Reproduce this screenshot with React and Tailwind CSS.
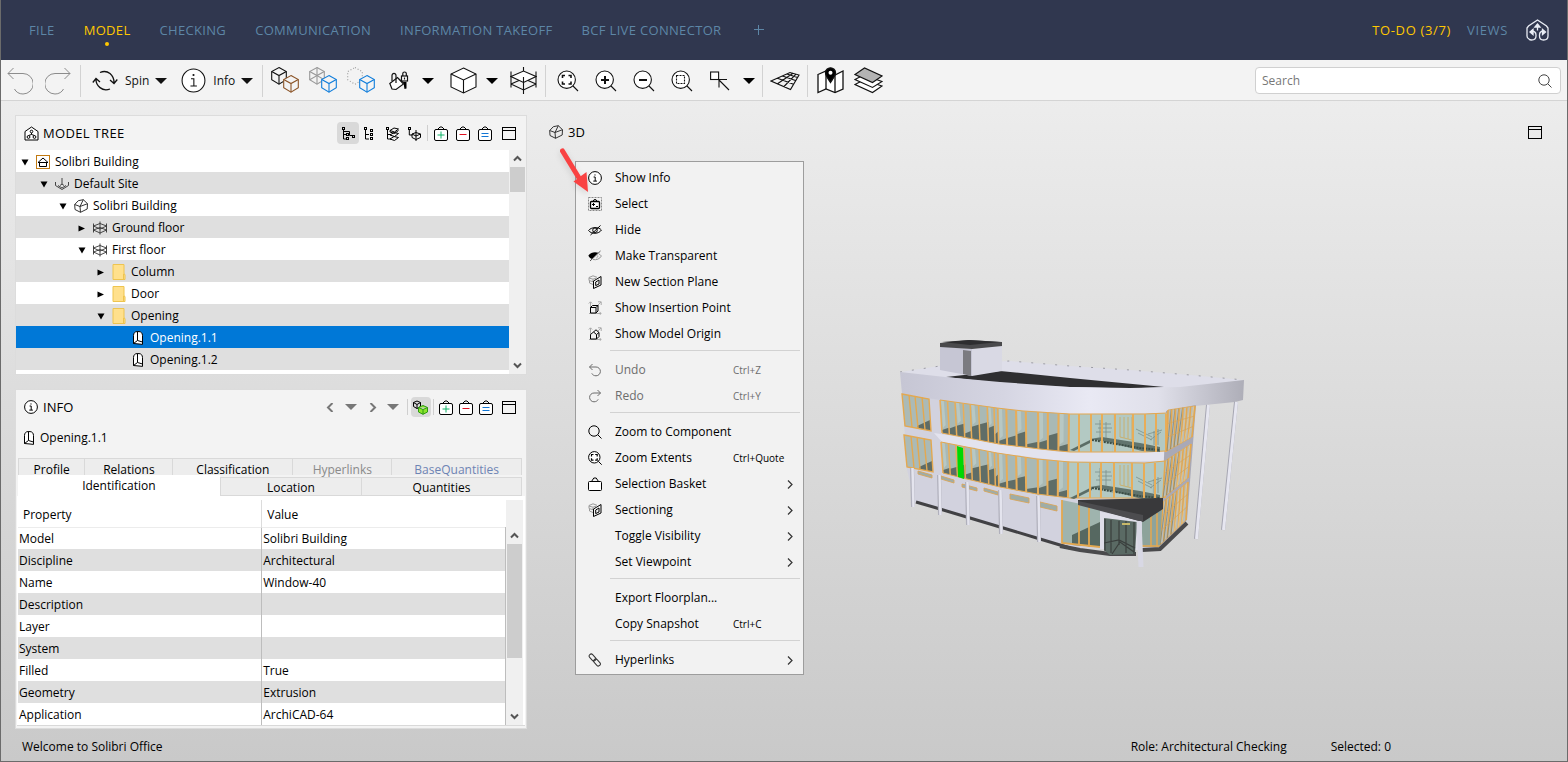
import { useState } from "react";

const NAV = ["FILE", "MODEL", "CHECKING", "COMMUNICATION", "INFORMATION TAKEOFF", "BCF LIVE CONNECTOR"];

const TREE = [
  { label: "Solibri Building", depth: 0, open: true, icon: "project" },
  { label: "Default Site", depth: 1, open: true, icon: "site" },
  { label: "Solibri Building", depth: 2, open: true, icon: "building" },
  { label: "Ground floor", depth: 3, open: false, icon: "floor" },
  { label: "First floor", depth: 3, open: true, icon: "floor" },
  { label: "Column", depth: 4, open: false, icon: "folder" },
  { label: "Door", depth: 4, open: false, icon: "folder" },
  { label: "Opening", depth: 4, open: true, icon: "folder" },
  { label: "Opening.1.1", depth: 5, icon: "opening" },
  { label: "Opening.1.2", depth: 5, icon: "opening" },
];

const PROPERTIES = [
  ["Model", "Solibri Building"],
  ["Discipline", "Architectural"],
  ["Name", "Window-40"],
  ["Description", ""],
  ["Layer", ""],
  ["System", ""],
  ["Filled", "True"],
  ["Geometry", "Extrusion"],
  ["Application", "ArchiCAD-64"],
];

const MENU = [
  [
    { label: "Show Info", icon: "info" },
    { label: "Select", icon: "select" },
    { label: "Hide", icon: "hide" },
    { label: "Make Transparent", icon: "transparent" },
    { label: "New Section Plane", icon: "section" },
    { label: "Show Insertion Point", icon: "insertion" },
    { label: "Show Model Origin", icon: "origin" },
  ],
  [
    { label: "Undo", icon: "undo", keys: "Ctrl+Z", disabled: true },
    { label: "Redo", icon: "redo", keys: "Ctrl+Y", disabled: true },
  ],
  [
    { label: "Zoom to Component", icon: "search" },
    { label: "Zoom Extents", icon: "extents", keys: "Ctrl+Quote" },
    { label: "Selection Basket", icon: "basket", sub: true },
    { label: "Sectioning", icon: "section", sub: true },
    { label: "Toggle Visibility", sub: true },
    { label: "Set Viewpoint", sub: true },
  ],
  [{ label: "Export Floorplan..." }, { label: "Copy Snapshot", keys: "Ctrl+C" }],
  [{ label: "Hyperlinks", icon: "link", sub: true }],
];

/* ---------- icons ---------- */

function Svg({ w = 14, h = 14, box, children, sw = 1 }) {
  return (
    <svg
      width={w}
      height={h}
      viewBox={box || `0 0 ${w} ${h}`}
      fill="none"
      stroke="currentColor"
      strokeWidth={sw}
      className="shrink-0"
      aria-hidden="true"
    >
      {children}
    </svg>
  );
}

function InfoIcon({ size = 14 }) {
  return (
    <Svg w={size} h={size} box="0 0 14 14" sw={size > 20 ? 0.6 : 1}>
      <circle cx="7" cy="7" r="6.4" fill="#fff" />
      <path d="M5.6 6h1.6v4M5.3 10.1h3.6" />
      <circle cx="7" cy="3.9" r=".6" fill="currentColor" stroke="none" />
    </Svg>
  );
}

function SmallIcon({ name }) {
  switch (name) {
    case "project":
      return (
        <Svg>
          <rect x=".5" y=".5" width="13" height="13" fill="#fff" stroke="#c27a12" />
          <path d="M2 7.5L7 3l5 4.5M3.5 7v4.5h7V7M2 7.5h10" />
        </Svg>
      );
    case "site":
      return (
        <Svg>
          <path d="M.5 5v3.5l6.5 4 6.5-4V5M3 8.500L7 11l4-2.500M7 1v6.500M5 8.500l2-1.500 2 1.500" stroke="#444" />
        </Svg>
      );
    case "building":
      return (
        <Svg>
          <path d="M.7 5.500l3.600-3.800 5-1 4.200 4-.3 5.300L6.500 13.300 1 10.500zM.7 5.500L6 7.500l3.300-6.800M6 7.500l.5 5.800M6 7.500l7.500-2.800" stroke="#333" />
        </Svg>
      );
    case "floor":
      return (
        <Svg>
          <path d="M.5 2.500v9M13.500 2.500v9M7 .5v13M.5 5L7 2.500 13.500 5 7 8zM.5 9L7 12l6.500-3M.5 9L7 6.500 13.500 9" stroke="#333" strokeWidth=".9" />
        </Svg>
      );
    case "folder":
      return (
        <Svg w={14} h={16}>
          <path d="M1 .5h11v9.500l1 .5v5H1z" fill="#ffe08c" stroke="#eec44f" />
          <path d="M11.500 10v5" stroke="#eec44f" />
        </Svg>
      );
    case "opening":
      return (
        <Svg>
          <path d="M2.500 12.500V4.500C2.500 2 4 .6 6 .6h2c2 0 3.500 1.500 3.500 4v8.800L8 13M2.500 12.500L8 13M6.500 1v8.500l-4 3M6.500 9.500l5 1.500" fill="#fff" />
        </Svg>
      );
    case "info":
      return <InfoIcon />;
    case "select":
      return (
        <Svg>
          <rect x=".5" y=".5" width="13" height="13" stroke="#888" strokeDasharray="2 1" />
          <rect x="2.500" y="4.500" width="9" height="7" rx="1" fill="#fff" strokeWidth="1.300" />
          <path d="M5 4.500l1-1.800h2l1 1.800M4 7.500h3M5.500 6v3M8 9.500h2" />
        </Svg>
      );
    case "hide":
      return (
        <Svg>
          <path d="M.6 7.500C3 3.800 11 3.800 13.400 7c-2.400 4.300-10.400 4.300-12.800.5z" />
          <circle cx="7" cy="7.200" r="2.300" />
          <path d="M2.500 12L12.500 2.500" />
        </Svg>
      );
    case "transparent":
      return (
        <Svg>
          <path d="M5 10.500c3.500.8 6.700-.5 8.400-3.500-.7-1-1.500-1.600-2.500-2M8.500 9c1-.5 1.500-1.500 1.200-2.500" stroke="#999" />
          <path d="M.4 6.500C3 3 7 2.800 10.500 3.800L4 10C2.500 9.500 1 8.500.4 6.500z" fill="currentColor" stroke="none" />
          <path d="M2 12L12.500 2" stroke="#555" />
        </Svg>
      );
    case "section":
      return (
        <Svg>
          <path d="M6 7L1 5.500v-3L5 .8l4 1.500M1 3l4 1.200 3-1M5 7v-2.500M1.500 6v2L5 9.500" stroke="#999" />
          <path d="M5.500 6L13 1.500v8.500l-7.500 3.500zM7.700 7l3.300-2v4L7.700 10.600z" />
        </Svg>
      );
    case "insertion":
    case "origin":
      return (
        <Svg>
          <path d="M2.500 13V1M.8 2.500L2.500.8l1.700 1.700M1 12.500h12M11.500 10.800l1.700 1.700-1.500 1.300M9 5l4-4M10 .8h3.200V4" stroke="#aaa" />
          {name === "insertion" ? (
            <path d="M2.500 6.500h5.500v5.500H2.500zM2.500 6.500L4.500 4.500h5.500v5.500L8 12M8 6.500l2-2" fill="#f2f2f2" />
          ) : (
            <path d="M2.500 12V7.500l3-2.500 3 2.500V12zM5.500 5L8 2.800l3 2.700v4L8.500 12M8.500 7.500l2.500-2" fill="#f2f2f2" />
          )}
        </Svg>
      );
    case "undo":
      return (
        <Svg>
          <path d="M4.500 1L1.500 4l3 3M1.500 4H8a4.400 4.400 0 0 1 0 8.800c-2 0-3.500-1-4.200-2.400" />
        </Svg>
      );
    case "redo":
      return (
        <Svg>
          <path d="M9.500 1l3 3-3 3M12.500 4H6a4.400 4.400 0 0 0 0 8.800c2 0 3.500-1 4.200-2.400" />
        </Svg>
      );
    case "search":
      return (
        <Svg>
          <circle cx="6" cy="6" r="5.200" />
          <path d="M9.800 9.800L13.500 13.500" />
        </Svg>
      );
    case "extents":
      return (
        <Svg>
          <circle cx="6.300" cy="6.300" r="5.700" fill="#fff" />
          <path d="M3.500 5.500v-2h2M7.200 3.500h2v2M9.200 7.200v2h-2M5.500 9.200h-2v-2" strokeWidth="1.200" />
          <path d="M10.300 10.300L13.700 13.700" />
        </Svg>
      );
    case "basket":
      return (
        <Svg>
          <rect x=".5" y="4.500" width="13" height="9" rx="1" fill="#fff" />
          <path d="M3.500 4.500L5.800 1h2.400l2.300 3.500" />
        </Svg>
      );
    case "link":
      return (
        <Svg>
          <g stroke="#333">
            <rect x="-4" y="-2" width="8" height="4" rx="2" transform="translate(4.500 4.500) rotate(48)" />
            <rect x="-4" y="-2" width="8" height="4" rx="2" transform="translate(9 9.500) rotate(48)" />
          </g>
        </Svg>
      );
    default:
      return null;
  }
}

function Cube({ x = 0, y = 0, color, fill = "none", dash, star }) {
  return (
    <g transform={`translate(${x} ${y})`} stroke={color} strokeDasharray={dash} strokeWidth="1.100">
      <path d="M8 .6l7.300 4v8.200L8 17.200.700 12.800V4.600z" fill={fill} />
      {!dash && <path d="M.700 4.600L8 8.600l7.300-4M8 8.600v8.600" />}
      {star && <path d="M.700 12.800L8 8.600l7.300 4.200M8 .6v8" />}
    </g>
  );
}

function ToolIcon({ name }) {
  switch (name) {
    case "undo":
      return (
        <Svg w={26} h={28}>
          <path d="M6.500 1L1 6.500 6.500 12M1 6.500h15a10 10 0 0 1 0 20.500c-4 0-7-2-8.500-5" stroke="#8c8c8c" />
        </Svg>
      );
    case "redo":
      return (
        <Svg w={26} h={28}>
          <path d="M19.500 1L25 6.500 19.500 12M25 6.500H10A10 10 0 0 0 10 27c4 0 7-2 8.500-5" stroke="#8c8c8c" />
        </Svg>
      );
    case "spin":
      return (
        <Svg w={26} h={22} sw={1.300}>
          <path d="M4 9.500c0 6 6 12.500 14 9.500M22 12.500c0-7-6-13.500-14-10M.8 12.500l3.200-4 4 3.500M18 10l4 3.500 3.300-4" />
        </Svg>
      );
    case "cubes":
      return (
        <Svg w={29} h={27}>
          <Cube color="#111" />
          <Cube x={12} y={8} color="#8b5326" fill="#f3f3f3" />
        </Svg>
      );
    case "cubesGrey":
      return (
        <Svg w={29} h={27}>
          <Cube color="#999" star />
          <Cube x={12} y={8} color="#0f7ddb" fill="#f3f3f3" />
        </Svg>
      );
    case "cubesDash":
      return (
        <Svg w={29} h={27}>
          <Cube color="#999" dash="1 2" />
          <Cube x={12} y={8} color="#0f7ddb" fill="#f3f3f3" />
        </Svg>
      );
    case "paint":
      return (
        <Svg w={20} h={20} sw={1.200}>
          <path d="M.8 12.500L8.500 6.500l6 6.500-7.500 5.500-4-.5z" fill="#fff" />
          <path d="M3 10V4.500c0-2.800 4-2.800 4 0v5M7 8v4" />
          <path d="M9 6.800l5.500 5.200 1 6 2-.5V11h-3z" fill="#000" stroke="none" />
          <rect x="12.500" y="5" width="6" height="5" fill="#fff" />
          <path d="M13.800 5V2.500c0-2 3.500-2 3.500 0V5M15.500 6.500v2" />
        </Svg>
      );
    case "cube":
      return (
        <Svg w={27} h={27} sw={1.100}>
          <path d="M13.500 1l12.500 6v13l-12.500 6L1 20V7z" fill="#fff" />
          <path d="M1 7l12.500 6L26 7M13.500 13v13" />
        </Svg>
      );
    case "floor":
      return (
        <Svg w={27} h={27} sw={1.100}>
          <path d="M1 9.500l12.500-5.500 12.500 5.500-12.500 6z" fill="#fff" />
          <path d="M1 4.500v16M26 4.500v16M13.500 0v4M13.500 10v17M1 17l12.500 6L26 17M1 17l8-3.500M26 17l-8-3.500" />
        </Svg>
      );
    case "zoomFit":
    case "zoomIn":
    case "zoomOut":
    case "zoomArea":
      return (
        <Svg w={22} h={22} sw={1.100}>
          <circle cx="9.700" cy="9.700" r="8.700" fill="#fff" />
          <path d="M16 16l5 5" />
          {name === "zoomFit" && (
            <path d="M5.500 8V5.500H8M11.500 5.500H14V8M14 11.500V14h-2.500M8 14H5.500v-2.500" strokeWidth="1.600" />
          )}
          {name === "zoomIn" && <path d="M6 10h8M10 6v8" strokeWidth="2" />}
          {name === "zoomOut" && <path d="M6 10h8" strokeWidth="2" />}
          {name === "zoomArea" && <rect x="5.500" y="5.500" width="8" height="8" strokeDasharray="2 1" />}
        </Svg>
      );
    case "pick":
      return (
        <Svg w={20} h={20} sw={1.100}>
          <rect x=".6" y="1" width="8" height="7.500" fill="#fff" />
          <path d="M8.500 8.500L19 19M9 8.500h8M9 8.500v8" />
        </Svg>
      );
    case "grid":
      return (
        <Svg w={30} h={20} sw={1.100}>
          <path d="M1 10L20 1.500l9 2.500-8.500 14.500zM7.500 12.800L23 2.300M14 15.500L26 3.200M7.500 7.200l16 6M12.500 5l13 4.500M17 3l10.500 3.500" />
        </Svg>
      );
    case "map":
      return (
        <Svg w={27} h={27} sw={1.300}>
          <path d="M1 7.500l8-3.500 9 4 8-4v18l-8 3.500-9-3.500-8 3.500z" fill="#fff" />
          <path d="M9 4v18M18 8v17.500" />
          <path d="M13.500 15.500C10.500 11 8.500 8.500 8.500 5.800a5 5 0 0 1 10 0c0 2.700-2 5.200-5 9.700z" fill="#000" />
          <circle cx="13.500" cy="5.800" r="2" fill="#fff" stroke="none" />
        </Svg>
      );
    case "layers":
      return (
        <Svg w={29} h={27} sw={1.100}>
          <path d="M1 17.500l8.500-4.500L28 19l-9.500 6.500z" fill="#fff" />
          <path d="M1 12.500l8.500-4.500L28 14.500 18.500 20.500z" fill="#fff" />
          <path d="M1 7.500L10.500 1 28 9l-9.500 6.500z" fill="#b3b3b3" />
        </Svg>
      );
    default:
      return null;
  }
}

function TreeModeIcon({ mode }) {
  return (
    <Svg w={14} h={15}>
      <rect x="1.500" y="1.500" width="2" height="2" />
      {mode !== "cube" && <path d="M2.500 3.500V13H6M2.500 8.500H6" />}
      {mode === "nested" && (
        <>
          <rect x="5.500" y="7.500" width="2" height="2" />
          <rect x="5.500" y="11.500" width="2" height="2" />
          <rect x="11.500" y="9.500" width="2" height="2" />
          <path d="M3 5.500h5.500v4H11" />
        </>
      )}
      {mode === "flat" && (
        <>
          <rect x="7.500" y="3.500" width="2" height="2" />
          <rect x="7.500" y="7.500" width="2" height="2" />
          <rect x="7.500" y="11.500" width="2" height="2" />
        </>
      )}
      {mode === "layer" && (
        <path d="M5 4.500l4-2.500 4.500 1-4 3zM5 9l4-2.500 4.500 1-4 3zM5 13l4-2.500 4.500 1-4 3zM5 4.500V6l4.500 1.500 4-3" />
      )}
      {mode === "cube" && (
        <path d="M2.300 3.500V9h3M5 8l4-1.500L13.500 8v3.500L9 13.500 5 11.500zM9 4v11M5 8l4 2 4.500-2" />
      )}
    </Svg>
  );
}

function BasketButton({ kind, label, size }) {
  return (
    <button aria-label={label} className={`${size} h-[22px] flex items-center justify-center`}>
      <Svg w={14} h={15}>
        <rect x=".5" y="3.500" width="13" height="11" rx="1.500" fill="#fff" />
        <path d="M3.500 3.500L6 1h2l2.500 2.500" />
        {kind === "add" && <path d="M3.500 9h7M7 5.500v7" stroke="#12b368" />}
        {kind === "remove" && <path d="M3.500 8.500h7" stroke="#e01020" />}
        {kind === "set" && <path d="M3.500 7.500h7M3.500 10.500h7" stroke="#1276d4" />}
      </Svg>
    </button>
  );
}

function WindowButton({ className = "" }) {
  return (
    <button aria-label="Maximize" className={`h-[22px] flex items-center justify-center ${className}`}>
      <Svg w={14} h={13}>
        <rect x=".5" y=".5" width="13" height="12" />
        <path d="M0 3.500h14" />
      </Svg>
    </button>
  );
}

function Caret({ className = "" }) {
  return (
    <svg width="12" height="6" viewBox="0 0 12 6" className={`shrink-0 ${className}`} fill="currentColor" aria-hidden="true">
      <path d="M0 0h12L6 6z" />
    </svg>
  );
}

function Chevron({ d, className = "" }) {
  return (
    <svg width="9" height="9" viewBox="0 0 9 9" fill="none" stroke="currentColor" strokeWidth="2" className={`shrink-0 ${className}`} aria-hidden="true">
      <path d={d} />
    </svg>
  );
}

function ScrollBar({ thumb }) {
  return (
    <div className="w-[17px] shrink-0 bg-[#f0f0f0] flex flex-col items-center text-[#555]">
      <div className="h-[17px] flex items-center">
        <Chevron d="M1 6.500L4.500 3 8 6.500" />
      </div>
      <div className={`w-[15px] bg-[#cdcdcd] ${thumb}`} />
      <div className="mt-auto h-[17px] flex items-center">
        <Chevron d="M1 2.500L4.500 6 8 2.500" />
      </div>
    </div>
  );
}

/* ---------- chrome ---------- */

function Header() {
  return (
    <header className="h-[60px] bg-[#30374f] flex items-center text-[13px] text-[#5d86a6] pl-7 pr-[18px]">
      <nav className="flex items-center gap-[29px] tracking-wide">
        {NAV.map((item) => (
          <a
            key={item}
            href={`#${item}`}
            className={item === "MODEL" ? "relative text-[#ffc800]" : "relative"}
          >
            {item}
            {item === "MODEL" && (
              <span className="absolute left-1/2 top-full mt-1 -ml-0.5 w-1 h-1 rounded-full bg-[#ffc800]" />
            )}
          </a>
        ))}
        <button aria-label="Add layout" className="ml-1">
          <Svg w={10} h={10}>
            <path d="M0 4.500h10M4.500 0v10" />
          </Svg>
        </button>
      </nav>
      <div className="ml-auto flex items-center gap-4 tracking-wider">
        <a href="#todo" className="text-[#ffc800]">TO-DO (3/7)</a>
        <a href="#views">VIEWS</a>
        <button aria-label="Solibri" className="text-[#e9edf5] ml-0.5">
          <Svg w={23} h={22} sw={1.300}>
            <path d="M3 20C1.500 19.500 1 18.500 1 17V9l1.500-2L11.500 1l9 6L22 9v8c0 3-2 4-4.500 4s-4-1.500-4-4v-1c0-3 2-4 4.500-4M5 12c3 0 5 1 5 4v1c0 2.500-1.500 4-4.500 4-1.500 0-2-.3-2.500-1M11.500 5.500v6" />
            <path d="M9 8l2.500-3L14 8zM4 13l3-2.500v5zM19.500 13l-3-2.500v5z" fill="currentColor" />
          </Svg>
        </button>
      </div>
    </header>
  );
}

function Tool({ name }) {
  return (
    <button aria-label={name} className="w-[38px] h-9 shrink-0 flex items-center justify-center">
      <ToolIcon name={name} />
    </button>
  );
}

function ToolCaret({ label }) {
  return (
    <button aria-label={label} className="w-5 h-9 shrink-0 flex items-center justify-center text-black">
      <Caret />
    </button>
  );
}

function Divider() {
  return <div className="w-px h-8 mx-[3px] shrink-0 bg-[#d2d2d2]" />;
}

function Toolbar() {
  return (
    <div className="h-[41px] bg-[#f3f3f3] border-b border-[#d4d4d4] flex items-center pt-px pr-1.5 text-[#111]">
      <Tool name="undo" />
      <Tool name="redo" />
      <Divider />
      <button className="h-9 flex items-center pr-1.5 shrink-0">
        <span className="w-[41px] flex justify-center">
          <ToolIcon name="spin" />
        </span>
        Spin
        <Caret className="ml-1.5" />
      </button>
      <button className="h-9 flex items-center pr-1.5 shrink-0">
        <span className="w-10 flex justify-center">
          <InfoIcon size={25} />
        </span>
        Info
        <Caret className="ml-1.5" />
      </button>
      <Divider />
      <Tool name="cubes" />
      <Tool name="cubesGrey" />
      <Tool name="cubesDash" />
      <Tool name="paint" />
      <ToolCaret label="Colouring" />
      <span className="w-1.5" />
      <Tool name="cube" />
      <ToolCaret label="Viewpoint" />
      <span className="w-0.5" />
      <Tool name="floor" />
      <Divider />
      <Tool name="zoomFit" />
      <Tool name="zoomIn" />
      <Tool name="zoomOut" />
      <Tool name="zoomArea" />
      <Tool name="pick" />
      <ToolCaret label="Selection mode" />
      <Divider />
      <Tool name="grid" />
      <Divider />
      <Tool name="map" />
      <Tool name="layers" />
      <label className="ml-auto w-[306px] h-[27px] flex items-center rounded border border-[#d0d0d0] bg-white pl-1.5 pr-2 text-[#444]">
        <input type="text" aria-label="Search" placeholder="Search" className="flex-1 min-w-0 outline-none placeholder:text-[#777]" />
        <SmallIcon name="search" />
      </label>
    </div>
  );
}

function ModelTree() {
  const [selected, setSelected] = useState("Opening.1.1");

  return (
    <section className="border border-[#dcdcdc] bg-[#f3f3f3]">
      <div className="h-[34px] flex items-center pl-2 pr-1.5">
        <Svg w={15} h={15}>
          <path d="M1 14V5.500L7.500 1 14 5.500V14z" fill="#fff" />
          <circle cx="7.500" cy="5.500" r="1.300" />
          <circle cx="4.500" cy="11" r="1.400" />
          <circle cx="10.500" cy="11" r="1.400" />
          <path d="M7.500 7v1.500M4.500 9.500l3-1 3 1" />
        </Svg>
        <h2 className="ml-1 text-[13px] tracking-wide">MODEL TREE</h2>
        <div className="ml-auto flex items-center">
          {["nested", "flat", "layer", "cube"].map((mode) => (
            <button
              key={mode}
              aria-label={`Tree mode ${mode}`}
              className={`w-[22px] h-[22px] flex items-center justify-center rounded-sm ${
                mode === "nested" ? "bg-[#d9d9d9]" : ""
              }`}
            >
              <TreeModeIcon mode={mode} />
            </button>
          ))}
          <div className="w-px h-4 mx-0.5 bg-[#cfcfcf]" />
          <BasketButton kind="add" label="Add to basket" size="w-[22px]" />
          <BasketButton kind="remove" label="Remove from basket" size="w-[22px]" />
          <BasketButton kind="set" label="Set basket" size="w-[22px]" />
          <WindowButton className="w-[22px] ml-0.5" />
        </div>
      </div>

      <div className="flex bg-white">
        <ul className="flex-1 pb-1" role="tree">
          {TREE.map((node, i) => {
            const isSelected = node.label === selected;
            const stripe = i % 2 ? "bg-[#dfdfdf]" : "bg-white";
            return (
              <li key={i} role="treeitem" aria-selected={isSelected}>
                <button
                  onClick={() => setSelected(node.label)}
                  className={`w-full h-[22px] pt-0.5 flex items-center text-left ${
                    isSelected ? "bg-[#0078d7] text-white" : stripe
                  }`}
                  style={{ paddingLeft: node.depth * 19 }}
                >
                  <span className="w-[18px] flex justify-center">
                    {node.open !== undefined && (
                      <svg width="8" height="7" viewBox="0 0 8 7" aria-hidden="true">
                        <path d={node.open ? "M.5 .5h7L4 6.500z" : "M.5 .5L7 3.500.5 6.500z"} />
                      </svg>
                    )}
                  </span>
                  <span className="w-[18px] flex justify-center text-black">
                    <SmallIcon name={node.icon} />
                  </span>
                  <span className="pl-[3px]">{node.label}</span>
                </button>
              </li>
            );
          })}
        </ul>
        <ScrollBar thumb="h-[25px]" />
      </div>
    </section>
  );
}

function Tab({ children, className }) {
  return (
    <button role="tab" className={`border-[#d9d9d9] flex justify-center ${className}`}>
      {children}
    </button>
  );
}

function InfoPanel() {
  return (
    <section className="border border-[#dcdcdc] bg-[#f3f3f3]">
      <div className="h-[34px] flex items-center pl-2 pr-1.5">
        <InfoIcon />
        <h2 className="ml-[5px] text-[13px]">INFO</h2>
        <div className="ml-auto flex items-center">
          <button aria-label="Back" className="w-5 flex justify-center text-[#777]">
            <Chevron d="M6.500 0L2 4.500 6.500 9" />
          </button>
          <button aria-label="Back history" className="w-[22px] flex justify-center text-[#777]">
            <Caret />
          </button>
          <button aria-label="Forward" className="w-5 flex justify-center text-[#777]">
            <Chevron d="M2.500 0L7 4.500 2.500 9" />
          </button>
          <button aria-label="Forward history" className="w-[22px] flex justify-center text-[#777]">
            <Caret />
          </button>
          <div className="w-px h-4 mx-[3px] bg-[#cfcfcf]" />
          <button aria-label="Follow selection" className="w-5 h-5 rounded-sm bg-[#d9d9d9] flex items-center justify-center">
            <Svg w={16} h={15}>
              <path d="M4 1l3.500 1.500v4L4 8.500.500 6.500v-4zM.500 2.500L4 4.500l3.500-2M4 4.500v4" />
              <path d="M10 5.500l4.500 2v4.500L10 14.300 5.500 12V7.500zM5.500 7.500L10 9.500l4.500-2M10 9.500v4.800" fill="#8be52a" stroke="#2c9a10" />
            </Svg>
          </button>
          <div className="w-px h-4 mx-0.5 bg-[#cfcfcf]" />
          <BasketButton kind="add" label="Add to basket" size="w-5" />
          <BasketButton kind="remove" label="Remove from basket" size="w-5" />
          <BasketButton kind="set" label="Set basket" size="w-5" />
          <WindowButton className="w-[22px] ml-0.5" />
        </div>
      </div>

      <div className="h-[26px] pt-0.5 flex items-center gap-1 pl-1.5">
        <SmallIcon name="opening" />
        <span>Opening.1.1</span>
      </div>

      <div role="tablist" className="pt-2 px-0.5 leading-[22px]">
        <div className="flex h-[17px] mr-0.5 bg-[#ededed] border-t border-l border-[#d9d9d9]">
          <Tab className="flex-[66] border-r">Profile</Tab>
          <Tab className="flex-[88] border-r">Relations</Tab>
          <Tab className="flex-[120] border-r">Classification</Tab>
          <Tab className="flex-[99] border-r text-[#8a8a8a]">Hyperlinks</Tab>
          <Tab className="flex-[130] border-r text-[#6d84b4]">BaseQuantities</Tab>
        </div>
        <div className="flex h-[21px] mr-0.5">
          <Tab className="flex-[203] bg-white">Identification</Tab>
          <Tab className="flex-[141] mt-0.5 bg-[#ededed] border leading-5">Location</Tab>
          <Tab className="flex-[160] mt-0.5 bg-[#ededed] border border-l-0 leading-5">Quantities</Tab>
        </div>
      </div>

      <div className="mx-px mb-0.5 pt-1 pl-px pr-0.5 bg-white border-b border-[#d9d9d9] flex">
        <table className="flex-1 table-fixed border-collapse text-left">
          <thead>
            <tr className="h-[27px] border-b border-[#ececec]">
              <th className="w-1/2 font-normal p-0 pt-1 pl-[5px] border-r border-[#dcdcdc]">Property</th>
              <th className="w-1/2 font-normal p-0 pt-1 pl-[5px]">Value</th>
            </tr>
          </thead>
          <tbody>
            {PROPERTIES.map(([name, value]) => (
              <tr key={name} className="h-[22px] even:bg-[#dfdfdf]">
                <td className="p-0 pt-0.5 pl-px border-r border-[#bdbdbd]">{name}</td>
                <td className="p-0 pt-0.5 pl-px border-r border-[#bdbdbd]">{value}</td>
              </tr>
            ))}
          </tbody>
        </table>
        <div className="flex flex-col bg-[#f0f0f0] pt-[27px]">
          <div className="flex flex-1">
            <ScrollBar thumb="h-[114px]" />
          </div>
        </div>
      </div>
    </section>
  );
}

/* ---------- 3D scene ---------- */

// Facade outlines as [x, y] points; mullions are interpolated between them.
const ROW1 = {
  top: [[940, 400], [997, 408], [1023, 411], [1070, 414], [1145, 414], [1167, 413]],
  bottom: [[942, 433], [999, 444], [1040, 449], [1070, 452], [1145, 452], [1165, 451]],
};
const ROW2 = {
  top: [[941, 442], [997, 453], [1037, 459], [1070, 462], [1145, 463], [1165, 461]],
  bottom: [[943, 473], [967, 479], [1000, 487], [1037, 494], [1070, 498], [1163, 498]],
};
const MULLIONS = [
  0, 0.033, 0.066, 0.102, 0.133, 0.17, 0.208, 0.238, 0.254, 0.292, 0.335, 0.378, 0.432, 0.475,
  0.522, 0.568, 0.61, 0.664, 0.71, 0.764, 0.845, 0.905, 0.95, 1,
];
// Height of the shaded floor seen behind each pane.
const SHADE = [3, 6, 10, 4, 12, 16, 14, 9, 3, 7, 12, 3, 6, 14, 4];

function at(points, t) {
  const x0 = points[0][0];
  const x = x0 + (points[points.length - 1][0] - x0) * t;
  let i = 1;
  while (i < points.length - 1 && points[i][0] < x) i++;
  const [ax, ay] = points[i - 1];
  const [bx, by] = points[i];
  return [x, ay + ((by - ay) * (x - ax)) / (bx - ax)];
}

function Glazing({ row }) {
  const outline = [...row.top, ...[...row.bottom].reverse()].join(" ");
  return (
    <g>
      <polygon points={outline} fill="#a9b9b5" />
      {MULLIONS.slice(1).map((t, i) => {
        const [tx, ty] = at(row.top, MULLIONS[i]);
        const [ax, ay] = at(row.bottom, MULLIONS[i]);
        const [bx, by] = at(row.bottom, t);
        const [ux, uy] = at(row.top, t);
        return (
          <g key={t} stroke="none">
            {i < 15 && (
              <polygon points={`${ax},${ay} ${ax},${ay - SHADE[i]} ${bx},${by - SHADE[i] - 4} ${bx},${by}`} fill="#5f6d67" />
            )}
            {i < 15 && i % 2 === 0 && (
              <polygon points={`${tx + 1},${ty} ${(tx + ux) / 2},${ty} ${(ax + bx) / 2},${ay - SHADE[i] - 5} ${ax + 1},${ay - SHADE[i] - 2}`} fill="#b8c8c4" />
            )}
            {i >= 15 && <polygon points={`${tx},${ty} ${ux},${uy} ${bx},${by} ${ax},${ay}`} fill="#b3c9c3" />}
          </g>
        );
      })}
      <polyline points={row.top.join(" ")} stroke="#e3a850" />
      <polyline points={row.bottom.join(" ")} stroke="#e3a850" />
      {MULLIONS.slice(0, 16).map((t, i) => {
        const [ax, ay] = at(row.top, t);
        const [bx, by] = at(row.bottom, t);
        return <path key={t} d={`M${ax} ${ay}L${bx} ${by}`} stroke="#e8ad58" strokeWidth={i > 8 ? 2 : 1.5} />;
      })}
    </g>
  );
}

function SideGlazing({ a, b, c, d }) {
  const lines = [0, 0.14, 0.28, 0.42, 0.56, 0.7, 0.84, 1];
  const mix = (p, q, t) => [p[0] + (q[0] - p[0]) * t, p[1] + (q[1] - p[1]) * t];
  return (
    <g>
      <polygon points={[a, b, c, d].join(" ")} fill="#b9bdb8" stroke="#e3a850" strokeWidth=".8" />
      {lines.map((t) => (
        <g key={t}>
          <polyline points={[mix(a, b, t), mix(d, c, t)].join(" ")} stroke="#e3a850" strokeWidth="1.500" />
          {t < 1 && (
            <polyline
              points={[mix(a, b, t + 0.12), mix(d, c, t)].join(" ")}
              stroke={t > 0.5 ? "#e9c88d" : "#7c867e"}
              strokeWidth=".8"
            />
          )}
        </g>
      ))}
      {[0.33, 0.66].map((t) => (
        <polyline key={t} points={[mix(a, d, t), mix(b, c, t)].join(" ")} stroke="#d6a45a" strokeWidth=".7" />
      ))}
    </g>
  );
}

function Stairs({ y }) {
  return (
    <g>
      <path d={`M1070 ${y + 34}l22 -11v3l-18 9z`} fill="#5b6d66" />
      <path d={`M1090 ${y + 23}l12 -2 38 6 20 4v5l-18 -1 -30 -8z`} fill="#61746d" />
      <path d={`M1092 ${y + 24}l48 8 20 2`} stroke="#3b4d45" strokeWidth="2" strokeDasharray="2 1" />
      <path d={`M1120 ${y + 1}v20l12 3v-23M1124 ${y + 1}v21M1128 ${y + 1}v22`} stroke="#c8b070" />
      <path
        d={`M1095 ${y + 8}h16M1098 ${y + 12}h14M1096 ${y + 16}h15M1100 ${y + 4}v18M1106 ${y + 6}v16M1136 ${y + 13}l16 8M1138 ${y + 17}l14 7M1148 ${y + 18}l14 -4M1150 ${y + 24}l11 -8M1154 ${y + 15}v14M1158 ${y + 13}v16`}
        stroke="#7c918a"
        strokeWidth=".8"
      />
    </g>
  );
}

function Building() {
  return (
    <svg width="352" height="236" viewBox="896 336 352 236" fill="none" className="shrink-0" role="img" aria-label="Building model">
      <defs>
        <linearGradient id="wall" x1="900" x2="1244" y1="0" y2="0" gradientUnits="userSpaceOnUse">
          <stop offset="0" stopColor="#c6c6d4" />
          <stop offset=".3" stopColor="#d5d5e2" />
          <stop offset=".55" stopColor="#e9e9f4" />
          <stop offset=".75" stopColor="#e0e0ea" />
          <stop offset="1" stopColor="#aeaeb8" />
        </linearGradient>
      </defs>

      {/* roof and parapet */}
      <polygon points="900,372 960,363 1010,361 1070,366 1130,370 1190,375 1244,380 1180,389 1060,389 945,378" fill="#dedee9" />
      <path d="M900 372l60-9 50-2 60 5 60 4 60 5 54 5" stroke="#8b8b94" strokeWidth=".8" strokeDasharray="2 10" />
      <polygon points="946,377 1000,371 1070,378 1164,387 1130,388.500 1050,386.500 990,382" fill="#2f2f31" />

      {/* stair tower */}
      <polygon points="940,346 972,349 972,376 940,370" fill="#c6c6d4" />
      <polygon points="972,349 1002,346 1002,371 972,376" fill="#d9d9e4" />
      <polygon points="963,350 971,351 971,376 963,374" fill="#7b7b80" />
      <polygon points="940,343 969,340 1002,342 1002,346 972,349 940,347" fill="#4a4a4c" />
      <polygon points="942,342 969,340 1000,342 970,345" fill="#2e2e30" />

      {/* body */}
      <polygon points="902,390 1168,405 1163,500 1160,549 1070,548 915,502 907,470" fill="#d2d2de" />
      <polygon points="1060,452 1168,451 1165,461 1070,462 997,453 942,442 934,433 999,443" fill="#e3e3ee" />
      <polygon points="900,372 945,377 1000,382 1070,387 1130,388 1180,387 1244,380 1243,400 1235,402 1195,406 1167,413 1070,414 997,408 940,400 902,394" fill="url(#wall)" />
      <polygon points="1166,411 1196,405 1187,520 1160,550" fill="#a9a9b6" />

      {/* left wing windows */}
      {[[902, 394], [904, 435]].map(([x, y]) => (
        <g key={y} transform={`translate(${x} ${y})`}>
          <polygon points="0,0 27,5 29,37 3,32" fill="#abbab6" />
          <polygon points="15,32 28,26 29,37 15,34" fill="#5d6b65" />
          <path d="M0 0l27 5 2 32-26-5zM7 1l3 32M13 2l3 32M20 3l3 33" stroke="#e3a850" strokeWidth="1.400" />
        </g>
      ))}

      <Glazing row={ROW1} />
      <Stairs y={416} />
      <Glazing row={ROW2} />
      <Stairs y={464} />
      {[1079, 1091, 1102, 1115, 1133, 1145, 1156, 1166].map((x) => (
        <path key={x} d={`M${x} 414v38M${x - 1} 463v35`} stroke="#e8ad58" strokeWidth="2" />
      ))}
      <polygon points="957,446 963,448 964,479 958,477" fill="#00d800" />

      <SideGlazing a={[1168, 410]} b={[1195, 406]} c={[1192, 437]} d={[1167, 451]} />
      <SideGlazing a={[1165, 461]} b={[1191, 444]} c={[1188, 478]} d={[1163, 498]} />
      <SideGlazing a={[1163, 502]} b={[1188, 482]} c={[1186, 520]} d={[1160, 545]} />

      {/* ground floor */}
      {[[918, 471, 14], [941, 476, 13], [962, 484, 15], [984, 488, 14], [1010, 494, 19], [1040, 502, 17]].map(([x, y, w]) => (
        <path key={x} d={`M${x} ${y}l${w} 4v${w > 16 ? 5 : 3}l-${w} -4z`} fill="#9eada8" stroke="#d9a558" strokeWidth=".9" />
      ))}
      <path d="M916 502l24 7 30 9 30 9 40 12 30 9" stroke="#414144" strokeWidth="3" />
      <polygon points="1062,500 1100,508 1100,547 1062,543" fill="#9fb4ae" />
      <polygon points="1072,535 1100,522 1100,547 1072,545" fill="#566861" />
      <path d="M1062 500v43l38 4M1079 504v41M1089 506v41" stroke="#e3a850" strokeWidth="1.800" />
      <polygon points="1100,512 1138,518 1138,550 1100,549" fill="#dedee8" />
      <polygon points="1142,520 1162,508 1160,547 1142,547" fill="#8da39b" />
      <path d="M1151 516v31M1157 513v34M1142 546h18" stroke="#e3a850" strokeWidth="1.500" />
      <path d="M1060 546l20 4 30 4h26M1142 550l18-1 27-26" stroke="#4a4a4c" strokeWidth="4" />
      <polygon points="1104,518 1137,522 1135,554 1110,555 1104,550" fill="#5a6a64" />
      <path d="M1105 519v32M1111 520v33M1119 521v24M1126 521v32M1134 522v32M1104 543l15-3 16 8M1112 554l8-12 14 10" stroke="#3a3f3d" strokeWidth="1.200" />
      <path d="M1122 524h8" stroke="#c8b96a" strokeWidth="2" />
      <polygon points="1078,500 1163,498 1163,509 1143,522 1078,504" fill="#39393b" />
      <polygon points="1078,501 1143,515 1143,522 1078,505" fill="#4c4c4f" />

      {/* columns */}
      {[[912, 468, 507], [939, 475, 515], [967, 482, 525], [1000, 490, 534], [1038, 496, 542]].map(([x, a, b]) => (
        <g key={x}>
          <path d={`M${x} ${a}l1 ${b - a}`} stroke="#b0b0bc" strokeWidth="4" />
          <path d={`M${x + 0.5} ${a}l1 ${b - a}`} stroke="#e4e4ee" strokeWidth="2.500" />
        </g>
      ))}
      <path d="M1139 521l2 46" stroke="#d8d8e4" strokeWidth="5" />
      <path d="M1208 405l-12 134M1236 402l-13 128" stroke="#a6a6b2" strokeWidth="4" />
      <path d="M1208.500 405l-12 134M1236.500 402l-13 128" stroke="#e6e6f0" strokeWidth="3" />
    </svg>
  );
}

function ContextMenu() {
  return (
    <div role="menu" className="absolute left-[34px] top-[46px] w-[229px] border border-[#9d9d9d] bg-[#f2f2f2] pt-[3px] pb-px pl-0.5 pr-[3px]">
      {MENU.map((group, g) => (
        <div key={g}>
          {g > 0 && <div className="h-px mt-[3px] mb-1.5 ml-8 bg-[#d2d2d2]" />}
          {group.map((item) => (
            <button
              key={item.label}
              role="menuitem"
              className={`w-full h-[26px] flex items-center text-left ${item.disabled ? "text-[#6d6d6d]" : "text-black"}`}
            >
              <span className="w-[34px] flex justify-center">
                {item.icon && <SmallIcon name={item.icon} />}
              </span>
              <span className="w-[118px] ml-[3px] whitespace-nowrap">{item.label}</span>
              {item.keys && <span className="text-[10px]">{item.keys}</span>}
              {item.sub && (
                <svg width="6" height="9" viewBox="0 0 6 9" fill="none" stroke="#333" strokeWidth="1.200" className="ml-auto mr-[7px]" aria-hidden="true">
                  <path d="M1 .5l4 4-4 4" />
                </svg>
              )}
            </button>
          ))}
        </div>
      ))}
    </div>
  );
}

function Viewport() {
  return (
    <section className="relative flex-1 flex flex-col">
      <div className="h-[34px] flex items-center pl-2 pr-[11px]">
        <SmallIcon name="building" />
        <h2 className="ml-[5px] text-[13px]">3D</h2>
        <WindowButton className="ml-auto" />
      </div>
      <div className="flex-1 flex items-center justify-center pl-[50px] pt-7">
        <Building />
      </div>
      <ContextMenu />
      {/* callout arrow */}
      <svg width="36" height="50" viewBox="0 0 36 50" className="absolute left-[17px] top-[30px] drop-shadow-md" aria-hidden="true">
        <path d="M4.500 6l16.500 27" stroke="#f94242" strokeWidth="5" strokeLinecap="round" />
        <path d="M15.500 36.500l13-9.500 1.500 20z" fill="#f94242" />
      </svg>
    </section>
  );
}

export default function App() {
  return (
    <div className="min-h-screen flex flex-col border-x border-b border-[#6b6b6b] bg-linear-to-b from-[#f2f2f2] to-[#c9c9c9] font-['Open_Sans','Noto_Sans',sans-serif] text-[12px] leading-4 text-black">
      <Header />
      <Toolbar />
      <main className="flex-1 flex pt-3.5 pl-3.5 pr-3.5">
        <div className="w-[512px] shrink-0 flex flex-col gap-3.5">
          <ModelTree />
          <InfoPanel />
        </div>
        <div className="w-3.5 shrink-0" />
        <Viewport />
      </main>
      <footer className="h-[31px] pt-0.5 flex items-center pl-[21px] pr-44">
        <span>Welcome to Solibri Office</span>
        <span className="ml-auto mr-11">Role: Architectural Checking</span>
        <span>Selected: 0</span>
      </footer>
    </div>
  );
}
